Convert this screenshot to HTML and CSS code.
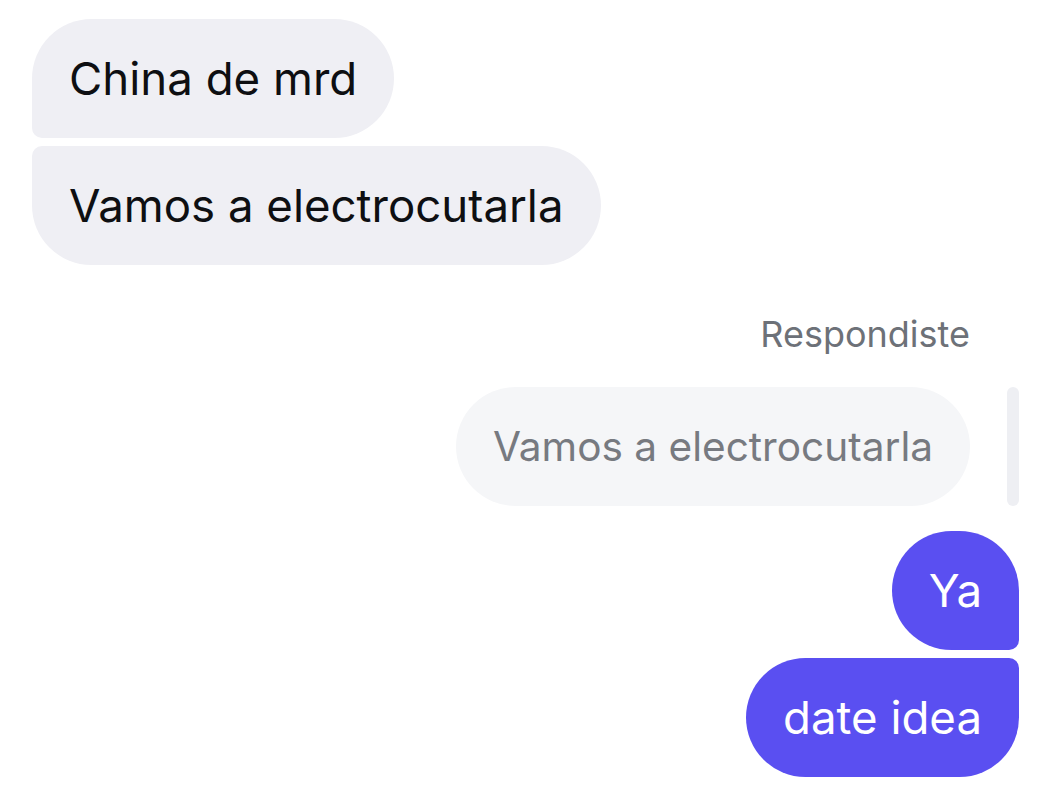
FILE: index.html
```html
<!DOCTYPE html>
<html lang="en">
<head>
    <meta charset="UTF-8">
    <meta name="viewport" content="width=device-width, initial-scale=1.0">
    <title>Chat</title>
    <link rel="stylesheet" href="styles.css">
</head>
<body>
    <div class="chat">
        <div class="bubble incoming first">China de mrd</div>
        <div class="bubble incoming last">Vamos a electrocutarla</div>

        <div class="replyLabel">Respondiste</div>
        <div class="replyRow">
            <div class="quoted">Vamos a electrocutarla</div>
            <div class="replyBar"></div>
        </div>

        <div class="bubble outgoing first">Ya</div>
        <div class="bubble outgoing last">date idea</div>
    </div>
</body>
</html>
```

FILE: styles.css
```css
body {
    margin: 0;
    background-color: #ffffff;
    font-family: Inter, "Noto Sans", sans-serif;
}

.chat {
    display: flex;
    flex-direction: column;
    padding: 19px 23px 0px 32px;
}

.bubble {
    padding: 33px 37px;
    font-size: 45.6px;
    line-height: 53px;
    border-radius: 60px;
    white-space: nowrap;
}

.incoming {
    align-self: flex-start;
    background-color: #efeff4;
    color: #0e0f12;
}
.incoming.first {
    border-bottom-left-radius: 10px;
    margin-bottom: 8px;
}
.incoming.last {
    border-top-left-radius: 10px;
}

.outgoing {
    align-self: flex-end;
    background-color: #5a4ff1;
    color: #ffffff;
}
.outgoing.first {
    border-bottom-right-radius: 10px;
    margin-bottom: 8px;
}
.outgoing.last {
    border-top-right-radius: 10px;
}

.replyLabel {
    align-self: flex-end;
    margin: 47px 49px 31px 0px;
    font-size: 36px;
    line-height: 44px;
    color: #6d7178;
}

.replyRow {
    align-self: flex-end;
    display: flex;
    gap: 37px;
    margin-bottom: 25px;
}

.quoted {
    padding: 33px 37px;
    font-size: 40.6px;
    line-height: 53px;
    border-radius: 60px;
    background-color: #f5f6f8;
    color: #777a80;
}

.replyBar {
    width: 12px;
    border-radius: 6px;
    background-color: #eeeff3;
}
```
